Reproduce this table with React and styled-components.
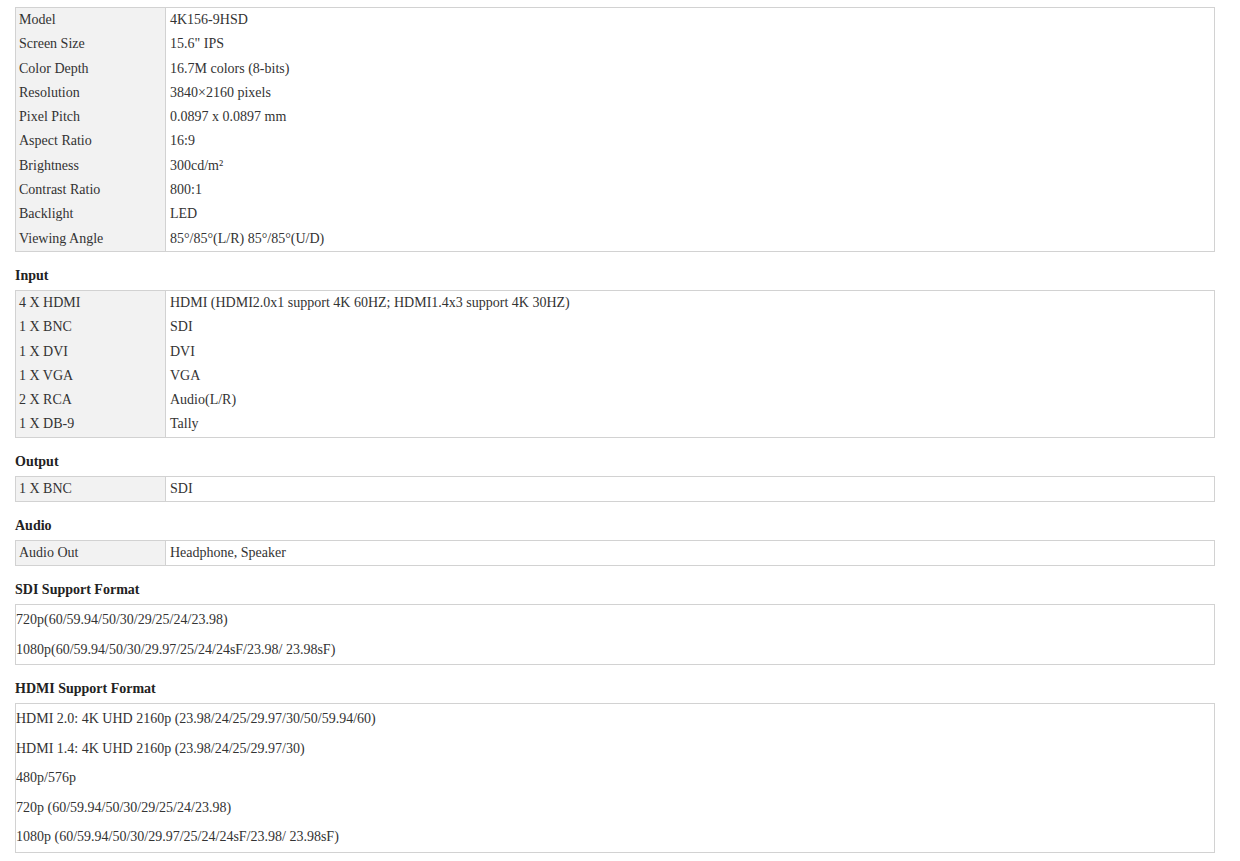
import React from "react";
import styled, { createGlobalStyle } from "styled-components";

const Global = createGlobalStyle`
  html, body { margin: 0; padding: 0; background: #fff; }
  body {
    font-family: "Liberation Serif", "Times New Roman", serif;
    font-size: 14px;
    color: #333;
  }
`;

const Page = styled.div`
  padding: 7px 0 0 15px;
  width: 1200px;
`;

const SpecTable = styled.div`
  display: grid;
  grid-template-columns: 150px 1fr;
  border: 1px solid #d2d2d2;
`;

const Label = styled.div`
  background: #f2f2f2;
  border-right: 1px solid #d2d2d2;
  padding: 0 3px;
  height: 24.3px;
  line-height: 24.3px;
  white-space: nowrap;
`;

const Value = styled.div`
  padding: 0 4px;
  height: 24.3px;
  line-height: 24.3px;
  white-space: nowrap;
`;

const Heading = styled.h3`
  margin: 16px 0 6px;
  font-size: 14px;
  font-weight: bold;
  line-height: 16px;
  color: #222;
`;

const FormatBox = styled.div`
  border: 1px solid #d2d2d2;
  display: flex;
  flex-direction: column;
`;

const FormatLine = styled.div`
  height: 29.5px;
  line-height: 29.5px;
  white-space: nowrap;
`;

const Spec = ({ rows }) => (
  <SpecTable>
    {rows.map(([k, v]) => (
      <React.Fragment key={k}>
        <Label>{k}</Label>
        <Value>{v}</Value>
      </React.Fragment>
    ))}
  </SpecTable>
);

const Formats = ({ lines }) => (
  <FormatBox>
    {lines.map((l) => (
      <FormatLine key={l}>{l}</FormatLine>
    ))}
  </FormatBox>
);

const general = [
  ["Model", "4K156-9HSD"],
  ["Screen Size", "15.6\" IPS"],
  ["Color Depth", "16.7M colors (8-bits)"],
  ["Resolution", "3840×2160 pixels"],
  ["Pixel Pitch", "0.0897 x 0.0897 mm"],
  ["Aspect Ratio", "16:9"],
  ["Brightness", "300cd/m²"],
  ["Contrast Ratio", "800:1"],
  ["Backlight", "LED"],
  ["Viewing Angle", "85°/85°(L/R) 85°/85°(U/D)"],
];

const input = [
  ["4 X HDMI", "HDMI (HDMI2.0x1 support 4K 60HZ; HDMI1.4x3 support 4K 30HZ)"],
  ["1 X BNC", "SDI"],
  ["1 X DVI", "DVI"],
  ["1 X VGA", "VGA"],
  ["2 X RCA", "Audio(L/R)"],
  ["1 X DB-9", "Tally"],
];

const output = [["1 X BNC", "SDI"]];
const audio = [["Audio Out", "Headphone, Speaker"]];

const sdi = [
  "720p(60/59.94/50/30/29/25/24/23.98)",
  "1080p(60/59.94/50/30/29.97/25/24/24sF/23.98/ 23.98sF)",
];

const hdmi = [
  "HDMI 2.0: 4K UHD 2160p (23.98/24/25/29.97/30/50/59.94/60)",
  "HDMI 1.4: 4K UHD 2160p (23.98/24/25/29.97/30)",
  "480p/576p",
  "720p (60/59.94/50/30/29/25/24/23.98)",
  "1080p (60/59.94/50/30/29.97/25/24/24sF/23.98/ 23.98sF)",
];

export default function App() {
  return (
    <>
      <Global />
      <Page>
        <Spec rows={general} />
        <Heading>Input</Heading>
        <Spec rows={input} />
        <Heading>Output</Heading>
        <Spec rows={output} />
        <Heading>Audio</Heading>
        <Spec rows={audio} />
        <Heading>SDI Support Format</Heading>
        <Formats lines={sdi} />
        <Heading>HDMI Support Format</Heading>
        <Formats lines={hdmi} />
      </Page>
    </>
  );
}
